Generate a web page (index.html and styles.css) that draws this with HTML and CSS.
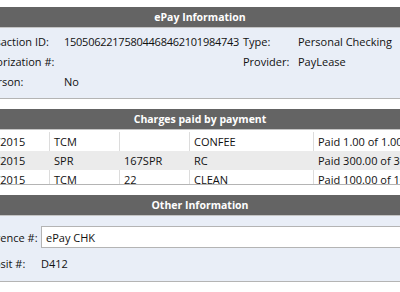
FILE: index.html
```html
<!DOCTYPE html>
<html>
<head>
<meta charset="utf-8">
<link rel="stylesheet" href="styles.css">
</head>
<body>
<div class="page">
  <section class="panel">
    <div class="panel-head">ePay Information</div>
    <div class="panel-body info">
      <div class="info-grid">
        <span class="lbl">Transaction ID:</span><span class="val id">15050622175804468462101984743</span>
        <span class="lbl">Type:</span><span class="val">Personal Checking</span>
        <span class="lbl">Authorization #:</span><span class="val"></span>
        <span class="lbl">Provider:</span><span class="val">PayLease</span>
        <span class="lbl">In Person:</span><span class="val">No</span>
        <span class="lbl"></span><span class="val"></span>
      </div>
    </div>
  </section>

  <section class="panel">
    <div class="panel-head">Charges paid by payment</div>
    <div class="table-wrap">
      <div class="trow">
        <div class="cell c1">05/06/2015</div><div class="cell c2">TCM</div><div class="cell c3"></div><div class="cell c4">CONFEE</div><div class="cell c5">Paid 1.00 of 1.00</div>
      </div>
      <div class="trow alt">
        <div class="cell c1">05/06/2015</div><div class="cell c2">SPR</div><div class="cell c3">167SPR</div><div class="cell c4">RC</div><div class="cell c5">Paid 300.00 of 300.00</div>
      </div>
      <div class="trow">
        <div class="cell c1">05/06/2015</div><div class="cell c2">TCM</div><div class="cell c3">22</div><div class="cell c4">CLEAN</div><div class="cell c5">Paid 100.00 of 100.00</div>
      </div>
    </div>
  </section>

  <section class="panel">
    <div class="panel-head">Other Information</div>
    <div class="panel-body other">
      <div class="other-row">
        <span class="olbl">Reference #:</span>
        <input class="oinput" type="text" value="ePay CHK">
      </div>
      <div class="other-row second">
        <span class="olbl">Deposit #:</span>
        <span class="oval">D412</span>
      </div>
    </div>
  </section>
</div>
</body>
</html>
```

FILE: styles.css
```css
html, body {
  margin: 0;
  padding: 0;
  background: #ffffff;
  overflow: hidden;
}
body {
  font-family: "Open Sans", "Noto Sans", sans-serif;
  font-size: 11px;
  color: #111111;
}
.page {
  width: 480px;
  margin-left: -40px;
  padding-top: 7px;
  display: flex;
  flex-direction: column;
  gap: 10px;
}
.panel {
  display: flex;
  flex-direction: column;
}
.panel-head {
  height: 20px;
  line-height: 20px;
  background: #646464;
  color: #ffffff;
  font-weight: bold;
  font-size: 10.5px;
  text-align: center;
  border-bottom: 1px solid #c4c4c4;
}
.panel-body {
  background: #e9eef7;
  border-bottom: 1px solid #b4b4b4;
}
.info {
  padding: 3px 0 7px 12px;
}
.info-grid {
  display: grid;
  grid-template-columns: 92px 179px 55px auto;
  grid-auto-rows: 20px;
  align-items: center;
}
.lbl, .val {
  white-space: nowrap;
}
.id {
  letter-spacing: -0.25px;
}
.table-wrap {
  height: 55px;
  overflow: hidden;
  border-bottom: 1px solid #b4b4b4;
  padding-top: 2px;
  box-sizing: border-box;
}
.trow {
  display: flex;
  height: 19px;
  background: #ffffff;
}
.trow.alt {
  background: #ebebeb;
}
.cell {
  box-sizing: border-box;
  padding-left: 4px;
  line-height: 19px;
  white-space: nowrap;
  overflow: hidden;
  border-right: 1px solid #dcdcdc;
}
.trow.alt .cell {
  border-right-color: #ebebeb;
}
.c1 { width: 90px; padding-left: 7px; }
.c2 { width: 70px; }
.c3 { width: 70px; }
.c4 { width: 124px; }
.c5 { flex: 1; border-right: none; }
.other {
  padding: 10px 0 8px 13px;
}
.other-row {
  display: flex;
  align-items: center;
}
.other-row.second {
  height: 20px;
  margin-top: 5px;
}
.olbl {
  width: 68px;
  white-space: nowrap;
}
.oinput {
  flex: 1;
  height: 22px;
  box-sizing: border-box;
  border: 1px solid #b4b4b4;
  background: #ffffff;
  font-family: "Open Sans", "Noto Sans", sans-serif;
  font-size: 11px;
  color: #111111;
  padding: 0 4px;
  margin: 0 -60px 0 0;
  outline: none;
}
.oval {
  white-space: nowrap;
}
```
